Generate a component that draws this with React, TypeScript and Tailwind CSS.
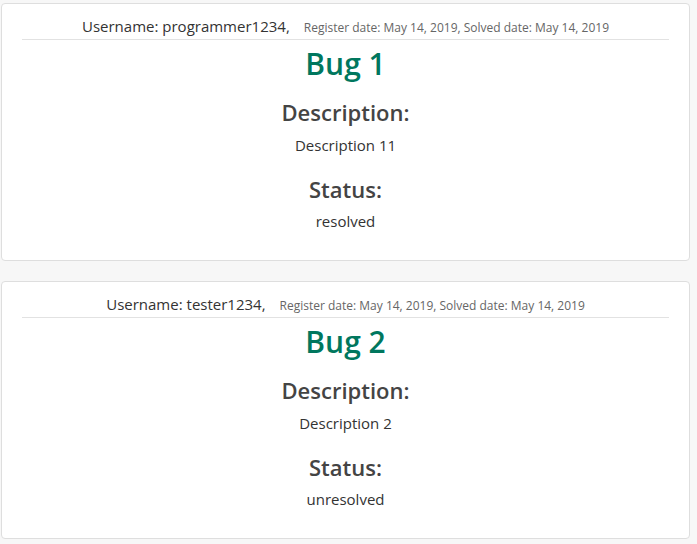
import React from "react";

const bugs = [
  { user: "programmer1234", title: "Bug 1", desc: "Description 11", status: "resolved" },
  { user: "tester1234", title: "Bug 2", desc: "Description 2", status: "unresolved" },
];

function Card({ b }: { b: (typeof bugs)[number] }) {
  return (
    <div className="bg-white border border-[#dedede] rounded-[4px] px-[20px] pt-[12px] h-[258px] flex flex-col items-center text-[#333]">
      <div className="w-full flex justify-center items-baseline border-b border-[#e2e2e2] pb-[1px]">
        <span className="text-[15px] leading-[20px] text-[#333]">Username: {b.user},</span>
        <span className="text-[12px] leading-[20px] text-[#666] ml-[14px]">
          Register date: May 14, 2019, Solved date: May 14, 2019
        </span>
      </div>
      <div className="text-[30px] leading-[44px] font-semibold text-[#00775e] mt-[2px]">{b.title}</div>
      <div className="text-[22px] leading-[30px] font-semibold text-[#444] mt-[11px]">Description:</div>
      <div className="text-[15px] leading-[22px] text-[#333] mt-[7px]">{b.desc}</div>
      <div className="text-[22px] leading-[30px] font-semibold text-[#444] mt-[18px]">Status:</div>
      <div className="text-[15px] leading-[22px] text-[#333] mt-[6px]">{b.status}</div>
    </div>
  );
}

export default function App() {
  return (
    <div
      className="min-h-[544px] bg-[#f7f7f7] pl-[1px] pr-[7px] pt-[3px] flex flex-col gap-[20px]"
      style={{ fontFamily: '"Open Sans", "Noto Sans", sans-serif' }}
    >
      {bugs.map((b) => (
        <Card key={b.title} b={b} />
      ))}
    </div>
  );
}
